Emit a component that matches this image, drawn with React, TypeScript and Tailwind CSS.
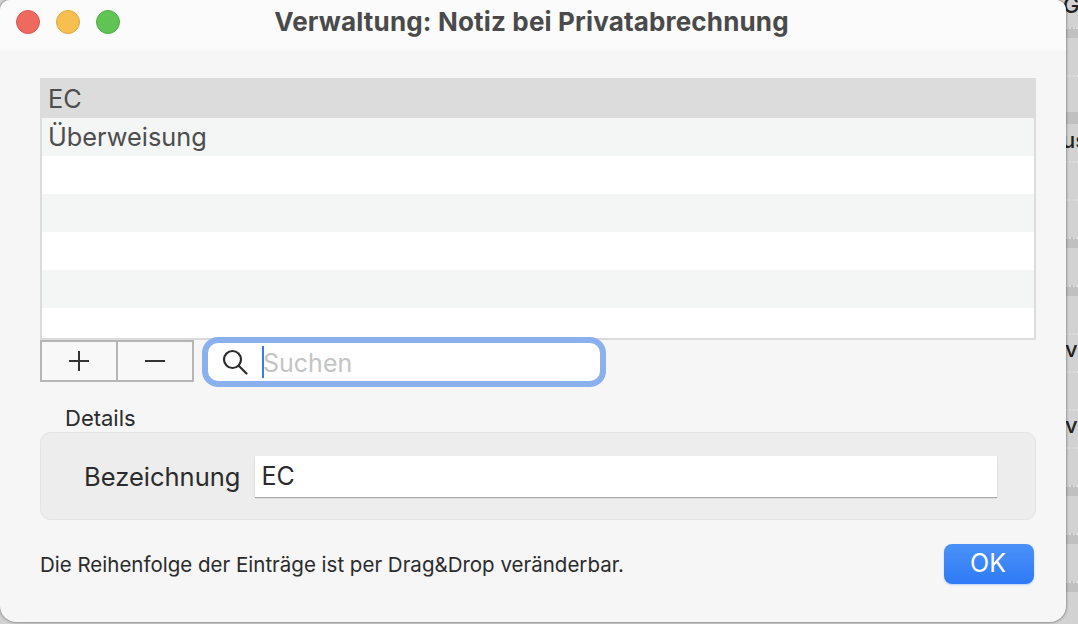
const rows = [
  { label: 'EC', className: 'h-[40px] bg-[#dcdcdc] pt-[1px]' },
  { label: 'Überweisung', className: 'h-[38px] bg-[#f4f5f5]' },
  { label: '', className: 'h-[38px] bg-white' },
  { label: '', className: 'h-[38px] bg-[#f4f5f5]' },
  { label: '', className: 'h-[38px] bg-white' },
  { label: '', className: 'h-[38px] bg-[#f4f5f5]' },
  { label: '', className: 'h-[30px] bg-white' },
]

// rows of the window behind the dialog, only its right edge is visible
const behind = [
  { className: 'h-[27px]', text: 'G', textClass: '-ml-[3px] -mt-[9px]' },
  { className: 'h-[11px] bg-[#c0c0c0] border-t-2 border-dotted border-[#dcdcdc]' },
  { className: 'h-[37px]' },
  { className: 'h-[37px] border-t-2 border-dotted border-[#dcdcdc]' },
  { className: 'h-[12px] bg-[#c0c0c0]' },
  { className: 'h-[37px]', text: 'us', textClass: '-ml-[4px] mt-[2px]' },
  { className: 'h-[38px] border-t-2 border-dotted border-[#dcdcdc]' },
  { className: 'h-[38px] border-t-2 border-dotted border-[#dcdcdc]' },
  { className: 'h-[11px] bg-[#c0c0c0] border-t-2 border-dotted border-[#dcdcdc]' },
  { className: 'h-[37px]' },
  { className: 'h-[11px] bg-[#c0c0c0] border-t-2 border-dotted border-[#dcdcdc]' },
  { className: 'h-[37px]' },
  { className: 'h-[38px] border-t-2 border-dotted border-[#dcdcdc]', text: 'v', textClass: '-ml-px' },
  { className: 'h-[38px] border-t-2 border-dotted border-[#dcdcdc]' },
  { className: 'h-[38px] border-t-2 border-dotted border-[#dcdcdc]', text: 'v', textClass: '-ml-px' },
  { className: 'h-[38px] border-t-2 border-dotted border-[#dcdcdc]' },
  { className: 'h-[11px] bg-[#c0c0c0] border-t-2 border-dotted border-[#dcdcdc]' },
  { className: 'h-[37px]' },
  { className: 'h-[11px] bg-[#c0c0c0] border-t-2 border-dotted border-[#dcdcdc]' },
  { className: 'h-[37px]' },
  { className: 'h-[11px] bg-[#c0c0c0] border-t-2 border-dotted border-[#dcdcdc]' },
]

function TrafficLight({ className }: { className: string }) {
  return <div className={`w-6 h-6 rounded-full border ${className}`} />
}

export default function App() {
  return (
    <div className="w-[1078px] h-[624px] flex items-start overflow-hidden bg-[#d2d2d2] font-['Inter',sans-serif]">
      <div className="relative z-10 w-[1066px] h-[622px] shrink-0 flex flex-col overflow-hidden rounded-t-[10px] rounded-b-[16px] bg-[#f6f6f6] shadow-[0_0_3px_rgba(0,0,0,0.6)]">
        <div className="h-[50px] shrink-0 flex items-center bg-[#fbfbfb] pl-4 pb-[6px]">
          <div className="flex gap-4">
            <TrafficLight className="bg-[#ee6a5f] border-[#d9574d]" />
            <TrafficLight className="bg-[#f6bf4f] border-[#dfa73c]" />
            <TrafficLight className="bg-[#60c454] border-[#52ad47]" />
          </div>
          <div className="flex-1 text-center pr-[123px] pb-[2px] text-[26px] tracking-[0.16px] font-bold text-[#4a4a4a] whitespace-nowrap">
            Verwaltung: Notiz bei Privatabrechnung
          </div>
        </div>

        <div className="flex-1 flex flex-col px-10 pt-7">
          <div className="w-[996px] h-[262px] flex flex-col border-x-2 border-b-2 border-[#dcdcdc] border-t-0">
            {rows.map((row, i) => (
              <div key={i} className={`${row.className} shrink-0 flex items-center pl-[6px] text-[25.3px] text-[#4d4d4d]`}>
                {row.label}
              </div>
            ))}
          </div>

          <div className="flex items-start">
            <div className="flex h-[42px] border-2 border-[#b6b6b6] bg-[#f8f8f8] text-[#333]">
              <div className="w-[76px] flex items-center justify-center border-r-2 border-[#b6b6b6]">
                <svg width="22" height="22" viewBox="0 0 22 22" fill="none" stroke="currentColor" strokeWidth="2">
                  <path d="M11 1v20M1 11h20" />
                </svg>
              </div>
              <div className="w-[74px] flex items-center justify-center">
                <svg width="22" height="22" viewBox="0 0 22 22" fill="none" stroke="currentColor" strokeWidth="2">
                  <path d="M1 11h20" />
                </svg>
              </div>
            </div>
            <div className="ml-[14px] mt-[3px] w-[392px] h-[38px] flex items-center rounded-[10px] bg-white pl-[13px] shadow-[0_0_0_6px_#8bb0ee]">
              <svg width="28" height="28" viewBox="0 0 28 28" fill="none" stroke="#2b2b2b" strokeWidth="2.2" strokeLinecap="round">
                <circle cx="11.5" cy="11.5" r="8.5" />
                <path d="M18 18l7.5 7.5" />
              </svg>
              <div className="ml-[13px] w-[2px] h-[32px] bg-[#3478f6]" />
              <span className="pt-[4px] -ml-px text-[25px] text-[#c4c4c4]">Suchen</span>
            </div>
          </div>

          <div className="mt-[24px] ml-[25px] text-[22px] leading-[24px] text-[#2b2b2b]">Details</div>

          <div className="mt-[2px] w-[996px] h-[88px] flex items-center rounded-[10px] border border-[#e4e4e4] bg-[#ededed] pl-[43px]">
            <span className="pt-[3px] text-[25.5px] text-[#2b2b2b]">Bezeichnung</span>
            <div className="ml-[15px] w-[742px] h-[41px] flex items-center bg-white pl-[6px] pt-[2px] text-[25px] text-[#2b2b2b] shadow-[0_1px_1px_rgba(0,0,0,0.3)]">
              EC
            </div>
          </div>

          <div className="mt-[24px] w-[994px] flex items-center justify-between">
            <span className="pt-[2px] text-[20.5px] text-[#2b2b2b] whitespace-nowrap">Die Reihenfolge der Einträge ist per Drag&amp;Drop veränderbar.</span>
            <div className="w-[90px] h-[40px] flex items-center justify-center rounded-[8px] bg-gradient-to-b from-[#4a92f8] to-[#2f7af6] pr-[2px] text-[25px] text-white shadow-[0_1px_2px_rgba(47,122,246,0.3)]">
              OK
            </div>
          </div>
        </div>
      </div>

      <div className="w-[12px] shrink-0 flex flex-col text-[22px] font-medium text-[#222]">
        {behind.map((row, i) => (
          <div key={i} className={`${row.className} shrink-0 leading-[28px] whitespace-nowrap`}>
            {row.text && <div className={row.textClass}>{row.text}</div>}
          </div>
        ))}
      </div>
    </div>
  )
}
